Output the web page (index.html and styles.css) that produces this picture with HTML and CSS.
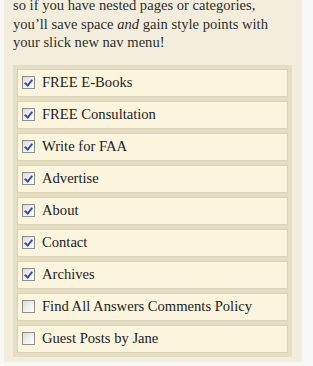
FILE: index.html
```html
<!DOCTYPE html>
<html lang="en">
<head>
    <meta charset="UTF-8">
    <meta name="viewport" content="width=device-width, initial-scale=1.0">
    <title>Nav Menu Widget</title>
    <link rel="stylesheet" href="styles.css">
</head>
<body>
    <div class="sidebar-panel">
        <p class="intro">so if you have nested pages or categories, you&rsquo;ll save space <em>and</em> gain style points with your slick new nav menu!</p>

        <ul class="page-list">
            <li class="page-item"><label><input type="checkbox" checked> FREE E-Books</label></li>
            <li class="page-item"><label><input type="checkbox" checked> FREE Consultation</label></li>
            <li class="page-item"><label><input type="checkbox" checked> Write for FAA</label></li>
            <li class="page-item"><label><input type="checkbox" checked> Advertise</label></li>
            <li class="page-item"><label><input type="checkbox" checked> About</label></li>
            <li class="page-item"><label><input type="checkbox" checked> Contact</label></li>
            <li class="page-item"><label><input type="checkbox" checked> Archives</label></li>
            <li class="page-item"><label><input type="checkbox"> Find All Answers Comments Policy</label></li>
            <li class="page-item"><label><input type="checkbox"> Guest Posts by Jane</label></li>
        </ul>
    </div>
</body>
</html>
```

FILE: styles.css
```css
body {
    margin: 0;
    background: #f8f8f8;
    font-family: "Liberation Serif", "Times New Roman", serif;
    color: #2b2b2b;
    overflow: hidden;
}

.sidebar-panel {
    margin-left: 4px;
    width: 298px;
    height: 366px;
    background: #f3eedc;
    padding: 0 10px 0 9px;
    box-sizing: border-box;
}

.intro {
    margin: -4px 0 0;
    padding: 0;
    font-size: 14.6px;
    line-height: 18.6px;
    color: #2e2e2e;
}

.page-list {
    list-style: none;
    margin: 13px 0 0;
    padding: 4px;
    background: #e4dec5;
    display: flex;
    flex-direction: column;
    gap: 4px;
}

.page-item {
    background: #fbf5de;
    border: 1px solid #dad3b3;
    height: 26px;
}

.page-item label {
    display: flex;
    align-items: center;
    height: 100%;
    padding-left: 4px;
    gap: 7px;
    font-size: 14.6px;
    color: #222;
}

.page-item input {
    appearance: none;
    -webkit-appearance: none;
    margin: 0;
    width: 13px;
    height: 13px;
    border: 1px solid #8e8f8f;
    background: linear-gradient(135deg, #dcdcd8 0%, #f4f4f2 60%, #fdfdfd 100%);
    box-sizing: border-box;
    position: relative;
}

.page-item input:checked::after {
    content: "";
    position: absolute;
    left: 3px;
    top: 1px;
    width: 3px;
    height: 6px;
    border-right: 2px solid #2f4fc4;
    border-bottom: 2px solid #2f4fc4;
    transform: rotate(40deg);
}
```
